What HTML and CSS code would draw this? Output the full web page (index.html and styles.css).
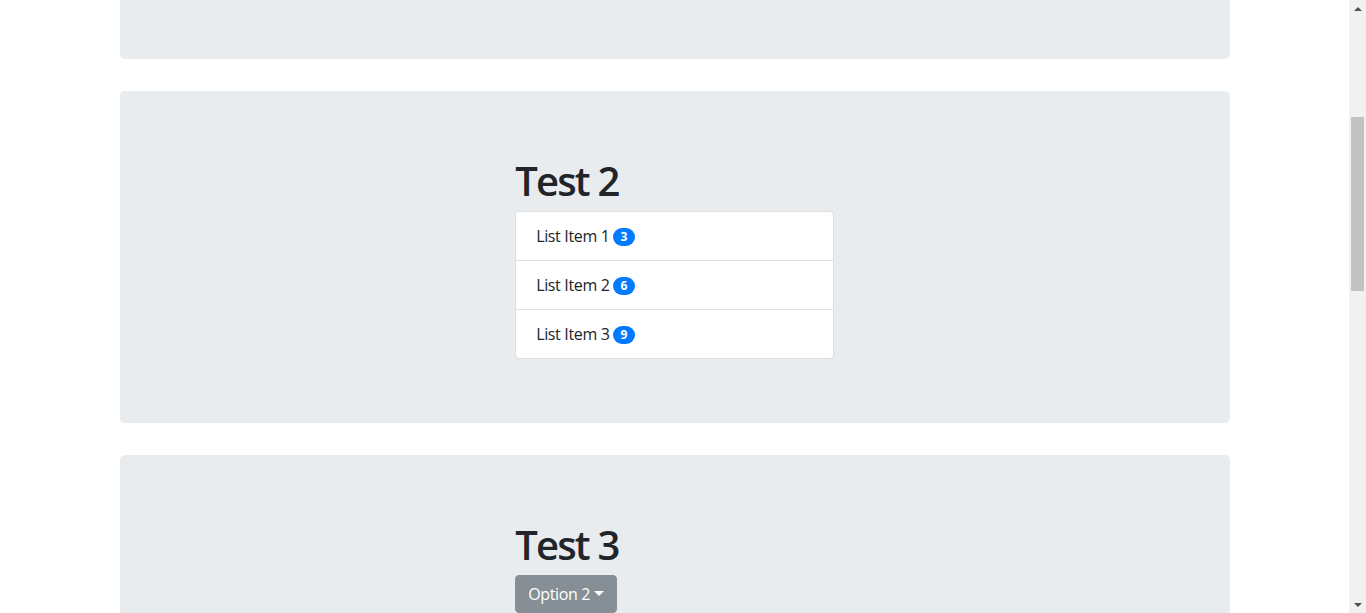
FILE: index.html
```html
<!DOCTYPE html>
<html lang="en">
<head>
<meta charset="utf-8">
<title>Tests</title>
<link rel="stylesheet" href="styles.css">
</head>
<body>
<div class="window">
  <main class="viewport">
    <div class="container">
      <section class="jumbotron jumbotron-tail"></section>

      <section class="jumbotron">
        <div class="grid">
          <div class="col">
            <h1>Test 2</h1>
            <ul class="list-group">
              <li class="list-item">List Item 1 <span class="badge">3</span></li>
              <li class="list-item">List Item 2 <span class="badge">6</span></li>
              <li class="list-item">List Item 3 <span class="badge">9</span></li>
            </ul>
          </div>
        </div>
      </section>

      <section class="jumbotron">
        <div class="grid">
          <div class="col">
            <h1>Test 3</h1>
            <button class="btn" type="button">Option 2<span class="caret"></span></button>
          </div>
        </div>
      </section>
    </div>
  </main>
  <div class="scrollbar" aria-hidden="true">
    <div class="scroll-btn"><span class="arrow-up"></span></div>
    <div class="scroll-track">
      <div class="scroll-thumb"></div>
    </div>
    <div class="scroll-btn"><span class="arrow-down"></span></div>
  </div>
</div>
</body>
</html>
```

FILE: styles.css
```css
* { box-sizing: border-box; }

html, body {
  margin: 0;
  padding: 0;
  height: 100%;
  overflow: hidden;
}

body {
  font-family: "Open Sans", "Noto Sans", "Liberation Sans", sans-serif;
  font-size: 16px;
  line-height: 1.5;
  color: #212529;
  background: #fff;
}

.window {
  display: flex;
  height: 100%;
}

.viewport {
  flex: 1;
  overflow: hidden;
}

.container {
  width: 1140px;
  margin: 0 auto;
  padding: 0 15px;
}

.jumbotron {
  background: #e9ecef;
  border-radius: 4.8px;
  padding: 64px 32px;
  margin-bottom: 32px;
}

.jumbotron-tail {
  height: 59px;
  padding: 0;
  border-top-left-radius: 0;
  border-top-right-radius: 0;
}

.grid {
  display: grid;
  grid-template-columns: 1fr 1fr 1fr;
}

.col {
  grid-column: 2;
  padding: 0 15px;
}

h1 {
  margin: 0 0 6px;
  padding-top: 2px;
  font-size: 40px;
  font-weight: 600;
  line-height: 1.2;
  letter-spacing: -1.8px;
}

.list-group {
  list-style: none;
  margin: 0;
  padding: 0;
  display: flex;
  flex-direction: column;
}

.list-item {
  background: #fff;
  border: 1px solid rgba(0, 0, 0, 0.125);
  margin-bottom: -1px;
  padding: 12px 20px;
  letter-spacing: -0.35px;
}

.list-item:first-child {
  border-top-left-radius: 4px;
  border-top-right-radius: 4px;
}

.list-item:last-child {
  margin-bottom: 0;
  border-bottom-left-radius: 4px;
  border-bottom-right-radius: 4px;
}

.badge {
  display: inline-block;
  padding: 3px 7.2px;
  font-size: 12px;
  font-weight: 700;
  line-height: 1;
  letter-spacing: 0;
  color: #fff;
  background: #007bff;
  border-radius: 160px;
  text-align: center;
  vertical-align: 1px;
}

.btn {
  display: inline-block;
  font-family: inherit;
  font-size: 16px;
  font-weight: 400;
  line-height: 1.5;
  letter-spacing: -0.35px;
  color: #fff;
  background: #868e96;
  border: 1px solid #868e96;
  border-radius: 4px;
  padding: 6px 12px;
  cursor: pointer;
}

.caret {
  display: inline-block;
  width: 0;
  height: 0;
  margin-left: 4px;
  vertical-align: 4px;
  border-top: 5px solid #fff;
  border-right: 5px solid transparent;
  border-left: 5px solid transparent;
}

.scrollbar {
  width: 17px;
  flex: none;
  background: #f1f1f1;
  display: flex;
  flex-direction: column;
}

.scroll-btn {
  height: 17px;
  display: flex;
  align-items: center;
  justify-content: center;
}

.arrow-up {
  width: 0;
  height: 0;
  border-left: 4px solid transparent;
  border-right: 4px solid transparent;
  border-bottom: 4px solid #505050;
}

.arrow-down {
  width: 0;
  height: 0;
  border-left: 4px solid transparent;
  border-right: 4px solid transparent;
  border-top: 4px solid #505050;
}

.scroll-track {
  flex: 1;
  padding: 100px 2px 0;
}

.scroll-thumb {
  height: 174px;
  background: #c1c1c1;
}
```
